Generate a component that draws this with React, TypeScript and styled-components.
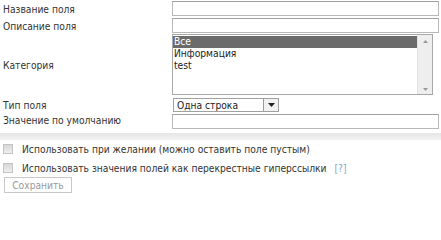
import React from "react";
import styled, { createGlobalStyle } from "styled-components";

const GlobalStyle = createGlobalStyle`
    html, body {
        margin: 0;
        padding: 0;
        background: #fff;
    }
    body {
        font-family: "DejaVu Sans Condensed", "DejaVu Sans", Verdana, sans-serif;
        font-stretch: condensed;
        font-size: 10.2px;
        color: #333;
    }
`;

const Page = styled.div`
    width: 441px;
    padding-top: 1px;
`;

const Form = styled.div`
    display: grid;
    grid-template-columns: 172px 1fr;
    grid-template-rows: 17px 16px 63px 16px 15px;
    padding-right: 3px;
`;

const Label = styled.div`
    display: flex;
    align-items: center;
    padding-left: 3px;
    white-space: nowrap;
`;

const TextInput = styled.div<{ $width?: number; $top?: number }>`
    box-sizing: border-box;
    height: 15px;
    margin-top: ${(p) => p.$top ?? 0}px;
    width: ${(p) => (p.$width ? `${p.$width}px` : "100%")};
    border: 1px solid #b8b8b8;
    border-top-color: #a0a0a0;
    background: #fff;
`;

const ListBox = styled.div`
    box-sizing: border-box;
    height: 61px;
    width: 261px;
    border: 1px solid #a8a8a8;
    display: flex;
`;

const Options = styled.div`
    flex: 1;
    padding-top: 1px;
`;

const Option = styled.div<{ $selected?: boolean }>`
    height: 12px;
    line-height: 12px;
    padding-left: 1px;
    color: ${(p) => (p.$selected ? "#fff" : "#222")};
    background: ${(p) => (p.$selected ? "#6b6b6b" : "transparent")};
`;

const Scrollbar = styled.div`
    width: 14px;
    background: #eeeeee;
    border-left: 1px solid #e2e2e2;
    display: flex;
    flex-direction: column;
    justify-content: space-between;
    align-items: center;
    padding: 5px 0 3px;
`;

const SelectBox = styled.div`
    box-sizing: border-box;
    width: 106px;
    height: 14px;
    border: 1px solid #a0a0a0;
    display: flex;
    align-items: center;
    margin-top: 1px;
    margin-left: 1px;
`;

const SelectText = styled.div`
    flex: 1;
    padding-left: 3px;
    color: #222;
`;

const SelectButton = styled.div`
    box-sizing: border-box;
    width: 15px;
    height: 12px;
    border-left: 1px solid #9a9a9a;
    background: #f2f2f2;
    display: flex;
    align-items: center;
    justify-content: center;
`;

const Separator = styled.div`
    height: 7px;
    margin-top: 5px;
    background: linear-gradient(#e6e6e6, #f2f2f2);
`;

const Checks = styled.div`
    display: flex;
    flex-direction: column;
    gap: 9px;
    padding: 4px 0 0 3px;
`;

const CheckRow = styled.label`
    display: flex;
    align-items: center;
    gap: 9px;
    height: 10px;
    white-space: nowrap;
`;

const Box = styled.span`
    box-sizing: border-box;
    width: 10px;
    height: 10px;
    border: 1px solid #c4c4c4;
    background: linear-gradient(#d6d6d6, #f0f0f0);
`;

const Help = styled.span`
    color: #7fa6c8;
    margin-left: 8px;
`;

const SaveButton = styled.button`
    box-sizing: border-box;
    display: block;
    margin: 4px 0 0 4px;
    width: 68px;
    height: 16px;
    padding: 0;
    border: 1px solid #c8c8c8;
    background: #fff;
    color: #999;
    font-family: inherit;
    font-stretch: condensed;
    font-size: 10.2px;
`;

const Arrow = ({ up }: { up?: boolean }) => (
    <svg width="5" height="3" viewBox="0 0 5 3">
        <path d={up ? "M0 3h5L2.5 0z" : "M0 0h5L2.5 3z"} fill="#999" />
    </svg>
);

export default function App(): React.ReactElement {
    return (
        <Page>
            <GlobalStyle />
            <Form>
                <Label>Название поля</Label>
                <TextInput />
                <Label>Описание поля</Label>
                <TextInput />
                <Label>Категория</Label>
                <ListBox>
                    <Options>
                        <Option $selected>Все</Option>
                        <Option>Информация</Option>
                        <Option>test</Option>
                    </Options>
                    <Scrollbar>
                        <Arrow up />
                        <Arrow />
                    </Scrollbar>
                </ListBox>
                <Label>Тип поля</Label>
                <SelectBox>
                    <SelectText>Одна строка</SelectText>
                    <SelectButton>
                        <svg width="7" height="4" viewBox="0 0 7 4">
                            <path d="M0 0h7L3.5 4z" fill="#222" />
                        </svg>
                    </SelectButton>
                </SelectBox>
                <Label>Значение по умолчанию</Label>
                <TextInput $width={267} $top={1} />
            </Form>
            <Separator />
            <Checks>
                <CheckRow>
                    <Box />
                    Использовать при желании (можно оставить поле пустым)
                </CheckRow>
                <CheckRow>
                    <Box />
                    <span>
                        Использовать значения полей как перекрестные гиперссылки
                        <Help>[?]</Help>
                    </span>
                </CheckRow>
            </Checks>
            <SaveButton>Сохранить</SaveButton>
        </Page>
    );
}
